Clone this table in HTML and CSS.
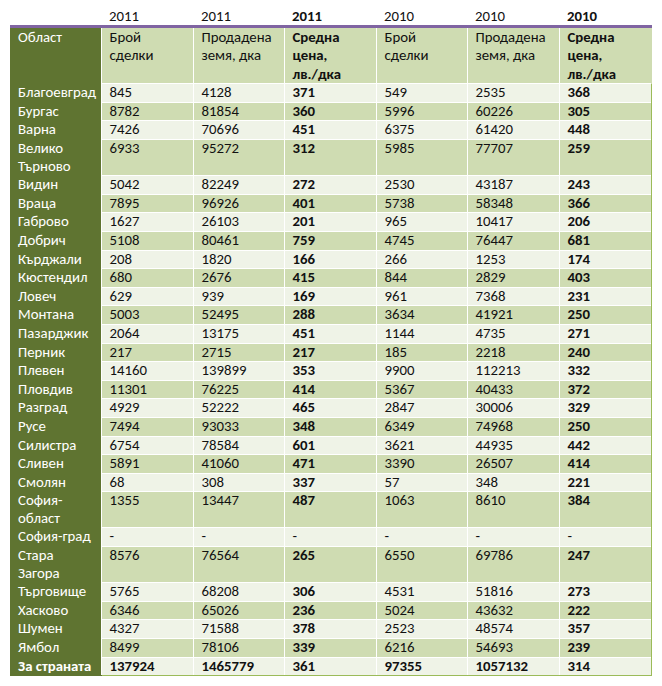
FILE: index.html
```html
<!DOCTYPE html>
<html lang="bg">
<head>
<meta charset="utf-8">
<title>Земеделска земя</title>
<link rel="stylesheet" href="styles.css">
</head>
<body>
<div class="wrap">
<table class="land">
<colgroup>
<col class="c0"><col class="c1"><col class="c2"><col class="c3"><col class="c4"><col class="c5"><col class="c6">
</colgroup>
<thead>
<tr class="years">
<th></th><th>2011</th><th>2011</th><th class="b">2011</th><th>2010</th><th>2010</th><th class="b">2010</th>
</tr>
<tr class="head">
<th class="name">Област</th>
<th>Брой<br>сделки</th>
<th>Продадена<br>земя, дка</th>
<th class="b">Средна<br>цена,<br>лв./дка</th>
<th>Брой<br>сделки</th>
<th>Продадена<br>земя, дка</th>
<th class="b">Средна<br>цена,<br>лв./дка</th>
</tr>
</thead>
<tbody>
<tr><th class="name">Благоевград</th><td>845</td><td>4128</td><td class="b">371</td><td>549</td><td>2535</td><td class="b">368</td></tr>
<tr><th class="name">Бургас</th><td>8782</td><td>81854</td><td class="b">360</td><td>5996</td><td>60226</td><td class="b">305</td></tr>
<tr><th class="name">Варна</th><td>7426</td><td>70696</td><td class="b">451</td><td>6375</td><td>61420</td><td class="b">448</td></tr>
<tr><th class="name">Велико<br>Търново</th><td>6933</td><td>95272</td><td class="b">312</td><td>5985</td><td>77707</td><td class="b">259</td></tr>
<tr><th class="name">Видин</th><td>5042</td><td>82249</td><td class="b">272</td><td>2530</td><td>43187</td><td class="b">243</td></tr>
<tr><th class="name">Враца</th><td>7895</td><td>96926</td><td class="b">401</td><td>5738</td><td>58348</td><td class="b">366</td></tr>
<tr><th class="name">Габрово</th><td>1627</td><td>26103</td><td class="b">201</td><td>965</td><td>10417</td><td class="b">206</td></tr>
<tr><th class="name">Добрич</th><td>5108</td><td>80461</td><td class="b">759</td><td>4745</td><td>76447</td><td class="b">681</td></tr>
<tr><th class="name">Кърджали</th><td>208</td><td>1820</td><td class="b">166</td><td>266</td><td>1253</td><td class="b">174</td></tr>
<tr><th class="name">Кюстендил</th><td>680</td><td>2676</td><td class="b">415</td><td>844</td><td>2829</td><td class="b">403</td></tr>
<tr><th class="name">Ловеч</th><td>629</td><td>939</td><td class="b">169</td><td>961</td><td>7368</td><td class="b">231</td></tr>
<tr><th class="name">Монтана</th><td>5003</td><td>52495</td><td class="b">288</td><td>3634</td><td>41921</td><td class="b">250</td></tr>
<tr><th class="name">Пазарджик</th><td>2064</td><td>13175</td><td class="b">451</td><td>1144</td><td>4735</td><td class="b">271</td></tr>
<tr><th class="name">Перник</th><td>217</td><td>2715</td><td class="b">217</td><td>185</td><td>2218</td><td class="b">240</td></tr>
<tr><th class="name">Плевен</th><td>14160</td><td>139899</td><td class="b">353</td><td>9900</td><td>112213</td><td class="b">332</td></tr>
<tr><th class="name">Пловдив</th><td>11301</td><td>76225</td><td class="b">414</td><td>5367</td><td>40433</td><td class="b">372</td></tr>
<tr><th class="name">Разград</th><td>4929</td><td>52222</td><td class="b">465</td><td>2847</td><td>30006</td><td class="b">329</td></tr>
<tr><th class="name">Русе</th><td>7494</td><td>93033</td><td class="b">348</td><td>6349</td><td>74968</td><td class="b">250</td></tr>
<tr><th class="name">Силистра</th><td>6754</td><td>78584</td><td class="b">601</td><td>3621</td><td>44935</td><td class="b">442</td></tr>
<tr><th class="name">Сливен</th><td>5891</td><td>41060</td><td class="b">471</td><td>3390</td><td>26507</td><td class="b">414</td></tr>
<tr><th class="name">Смолян</th><td>68</td><td>308</td><td class="b">337</td><td>57</td><td>348</td><td class="b">221</td></tr>
<tr><th class="name">София-<br>област</th><td>1355</td><td>13447</td><td class="b">487</td><td>1063</td><td>8610</td><td class="b">384</td></tr>
<tr><th class="name">София-град</th><td>-</td><td>-</td><td>-</td><td>-</td><td>-</td><td>-</td></tr>
<tr><th class="name">Стара<br>Загора</th><td>8576</td><td>76564</td><td class="b">265</td><td>6550</td><td>69786</td><td class="b">247</td></tr>
<tr><th class="name">Търговище</th><td>5765</td><td>68208</td><td class="b">306</td><td>4531</td><td>51816</td><td class="b">273</td></tr>
<tr><th class="name">Хасково</th><td>6346</td><td>65026</td><td class="b">236</td><td>5024</td><td>43632</td><td class="b">222</td></tr>
<tr><th class="name">Шумен</th><td>4327</td><td>71588</td><td class="b">378</td><td>2523</td><td>48574</td><td class="b">357</td></tr>
<tr><th class="name">Ямбол</th><td>8499</td><td>78106</td><td class="b">339</td><td>6216</td><td>54693</td><td class="b">239</td></tr>
<tr class="total"><th class="name">За страната</th><td>137924</td><td>1465779</td><td>361</td><td>97355</td><td>1057132</td><td>314</td></tr>
</tbody>
</table>
</div>
</body>
</html>
```
FILE: styles.css
```css
html, body {
  margin: 0;
  padding: 0;
  background: #ffffff;
}

.wrap {
  padding: 7px 0 0 10px;
}

.land {
  border-collapse: collapse;
  table-layout: fixed;
  width: 641px;
  font-family: Carlito, Roboto, "Liberation Sans", sans-serif;
  font-size: 14.8px;
  color: #111111;
}

.c0, .c2, .c4 { width: 91px; }
.c1, .c3, .c5, .c6 { width: 92px; }

.land th,
.land td {
  padding: 0 0 0 8px;
  text-align: left;
  vertical-align: top;
  white-space: nowrap;
  font-weight: normal;
  line-height: 17.6px;
  border-left: 1px solid #ffffff;
  border-top: 1px solid #ffffff;
}

.land .b { font-weight: bold; }

.years th {
  border: none;
  line-height: 18px;
  background: #ffffff;
}

.head th {
  border-top: 3px solid #8064a2;
  background: #cfdcb2;
  line-height: 18.4px;
  padding-top: 0;
  padding-bottom: 0;
}

.land th.name {
  background: #5f7431;
  color: #ffffff;
  border-left: none;
  border-top-color: #5f7431;
}

.head th.name {
  border-top-color: #8064a2;
}

.years th:first-child {
  background: #ffffff;
}

tbody tr:nth-child(odd) td { background: #eff3e7; }
tbody tr:nth-child(even) td { background: #cfdcb2; }

.land td:last-child,
.head th:last-child {
  border-right: 1px solid #9bbb59;
}

.head th:last-child {
  border-right-color: #cfdcb2;
}

.total th,
.total td {
  font-weight: bold;
  border-bottom: 1px solid #9bbb59;
}

.total th.name {
  border-bottom-color: #5f7431;
}
```
